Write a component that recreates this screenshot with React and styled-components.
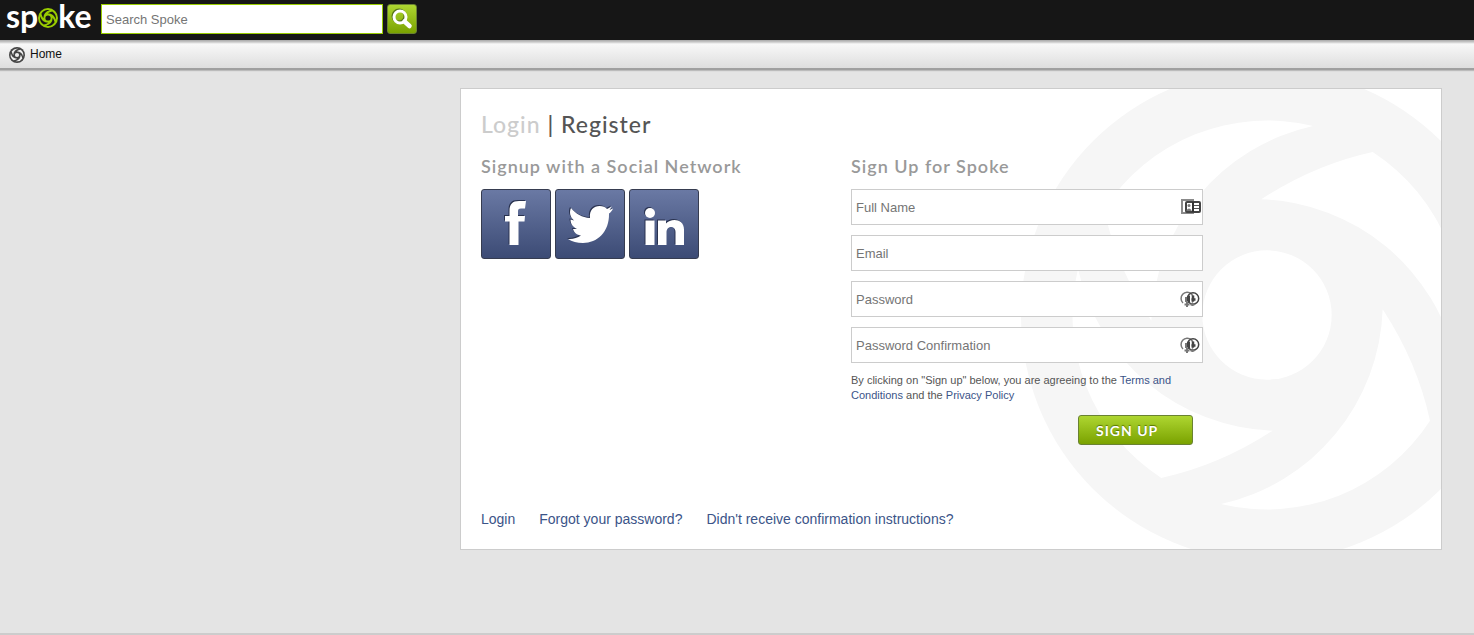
import React from "react";
import styled, { createGlobalStyle } from "styled-components";

const Global = createGlobalStyle`
  *, *::before, *::after { box-sizing: border-box; }
  html { min-height: 100%; background: #e4e4e4; }
  body {
    margin: 0;
    min-height: 100vh;
    font-family: "Liberation Sans", Arial, sans-serif;
    color: #555;
  }
  a { text-decoration: none; color: #3b5488; }
`;

const display = `font-family: Lato, "Open Sans", sans-serif;`;

const Page = styled.div`
  display: flex;
  flex-direction: column;
  min-height: 100vh;
  border-bottom: 2px solid #ccc;
`;

const TopBar = styled.header`
  display: flex;
  align-items: flex-start;
  height: 40px;
  padding: 0 6px;
  background: #161616;
`;

const Brand = styled.a`
  display: flex;
  align-items: flex-start;
  width: 95px;
  ${display}
  font-size: 32px;
  font-weight: 700;
  line-height: 32px;
  color: #fff;

  svg { margin-top: 8px; }
`;

const SearchForm = styled.form`
  display: flex;
  gap: 4px;
  padding-top: 4px;
`;

const SearchInput = styled.input`
  width: 282px;
  height: 30px;
  padding: 0 4px;
  border: 1px solid #9c0;
  font: 13px "Liberation Sans", Arial, sans-serif;
  color: #444;
  &::placeholder { color: #757575; opacity: 1; }
`;

const GreenButton = styled.button`
  height: 30px;
  padding: 0;
  border: 1px solid #6a8232;
  border-radius: 3px;
  background: linear-gradient(#aed631, #7aa200);
  color: #fff;
`;

const SearchButton = styled(GreenButton)`
  display: flex;
  align-items: center;
  justify-content: center;
  width: 30px;
`;

const Crumbs = styled.nav`
  display: flex;
  align-items: center;
  gap: 5px;
  height: 30px;
  padding: 2px 9px 0;
  border-bottom: 2px solid #a0a0a0;
  box-shadow: 0 1px 1px #bbb;
  background: linear-gradient(#a8a8a8, #c8c8c8 2px, #f8f8f8 4px, #dedede);
  font-size: 12px;

  a { color: #111; line-height: 14px; padding-bottom: 2px; }
`;

const Main = styled.main`
  display: flex;
  justify-content: flex-end;
  padding: 18px 32px;
`;

const Card = styled.section`
  position: relative;
  overflow: hidden;
  width: 982px;
  min-height: 462px;
  display: flex;
  flex-direction: column;
  justify-content: space-between;
  padding: 20px;
  border: 1px solid #ccc;
  background: #fff;
`;

const Watermark = styled.svg`
  position: absolute;
  right: -73px;
  top: -21px;
  width: 494px;
  height: 494px;
`;

const Content = styled.div`
  position: relative;
`;

const Title = styled.h1`
  margin: 0 0 16px;
  ${display}
  font-size: 23px;
  font-weight: 500;
  line-height: 30px;
  letter-spacing: 1px;
  color: #555;

  a { color: #ccc; }
`;

const Columns = styled.div`
  display: grid;
  grid-template-columns: 352px 352px;
  column-gap: 18px;
`;

const Heading = styled.h2`
  margin: 0 0 12px;
  ${display}
  font-size: 18px;
  font-weight: 600;
  line-height: 22px;
  letter-spacing: 1px;
  color: #999;
`;

const SocialRow = styled.div`
  display: flex;
  gap: 4px;
`;

const SocialLink = styled.a`
  width: 70px;
  height: 70px;
  border: 1px solid #363c50;
  border-radius: 3px;
  background: linear-gradient(#6a79a4, #3c4b75);
  svg { display: block; }
`;

const SignupForm = styled.form`
  display: flex;
  flex-direction: column;
  gap: 10px;
`;

const Field = styled.label`
  position: relative;
  display: block;
  height: 36px;
`;

const FieldInput = styled.input`
  width: 100%;
  height: 36px;
  padding: 0 24px 0 4px;
  border: 1px solid #ccc;
  background: #fff;
  font: 13px "Liberation Sans", Arial, sans-serif;
  color: #444;
  &::placeholder { color: #757575; opacity: 1; }
`;

const FieldIcon = styled.svg`
  position: absolute;
  right: 1px;
  top: 8px;
  width: 22px;
  height: 20px;
`;

const Terms = styled.p`
  margin: 0;
  max-width: 340px;
  font-size: 11px;
  line-height: 15px;
`;

const SubmitButton = styled(GreenButton)`
  align-self: flex-end;
  width: 115px;
  margin: 2px 10px 0 0;
  padding: 0 17px;
  ${display}
  font-size: 14px;
  font-weight: 700;
  letter-spacing: 1px;
  text-align: left;
  text-shadow: 0 -1px 1px #567300;
`;

const FooterLinks = styled.nav`
  position: relative;
  display: flex;
  gap: 24px;
  font-size: 14px;
  line-height: 20px;
`;

const ring = (r) => `M${-r} 0A${r} ${r} 0 1 0 ${r} 0A${r} ${r} 0 1 0 ${-r} 0Z`;
const blade =
  "M-17 -347Q142 -451 317 -489A583 583 0 0 1 567 138A619 619 0 0 0 -17 -347Z";

function Swirl({ color, cut, size }) {
  return (
    <svg width={size} height={size} viewBox="-740 -740 1480 1480" aria-hidden="true">
      <path d={ring(738)} fill={color} />
      <SwirlCuts cut={cut} />
    </svg>
  );
}

function SwirlCuts({ cut }) {
  return (
    <g fill={cut}>
      <circle r="194" />
      {[0, 90, 180, 270].map((a) => (
        <path key={a} d={blade} transform={`rotate(${a})`} />
      ))}
    </g>
  );
}

function CardIcon() {
  return (
    <FieldIcon viewBox="0 0 22 20" fill="none" aria-hidden="true">
      <rect x="2" y="3" width="11" height="13" stroke="#8a8a8a" strokeWidth="2" />
      <rect x="6" y="5" width="14" height="10" rx="1" stroke="#444" strokeWidth="2" />
      <path d="M13 5v10" stroke="#333" strokeWidth="2" />
      <circle cx="9" cy="8.500" r="1.500" fill="#777" />
      <path d="M6.500 14v-1q2.500-3 5 0v1z" fill="#777" />
      <path d="M14 8.500h5M14 11.500h5" stroke="#555" />
    </FieldIcon>
  );
}

function KeyIcon() {
  return (
    <FieldIcon viewBox="0 0 22 20" fill="none" aria-hidden="true">
      <path d="M3 14A6.200 6.200 0 1 1 12 13.500" stroke="#777" strokeWidth="1.500" />
      <circle cx="13" cy="9.500" r="5.700" stroke="#444" strokeWidth="1.500" />
      <path d="M6 8v5" stroke="#777" strokeWidth="2" />
      <path d="M9 6.500v7" stroke="#444" strokeWidth="2" />
      <path d="M13 6.500v6" stroke="#444" strokeWidth="2.500" />
      <path d="M11.500 10.500h4" stroke="#444" strokeWidth="2.500" />
      <path d="M4.500 15.500h5M7 13v5M10.500 15.500h4M12.500 14v3" stroke="#777" strokeWidth="2" />
    </FieldIcon>
  );
}

const GLYPHS = {
  Facebook: (
    <path d="M27.500 55V31.500H23V26H27.500V21C27.500 14 30.500 11 37 11H44L43 18.500H39C36.500 18.500 36 19.500 36 21.500V26H43L42.500 31.500H36.500V55Z" />
  ),
  Twitter: (
    <path d="M57 18.500C56 21 54.500 22.500 53 23.500C53.500 42 41 53 27 53C21 53 16 51.500 12 49C17 49.500 21 48 25 45.500C21 45 18 42.500 17 39H21C17 37 14.500 34 14.500 29.500L18 30.500C14 27 13 22 15 18C20 24 26 27.500 34 28C33 20 38 16 43.500 16C47 16 49.500 17 51 19L56 16.500L53.500 20Z" />
  ),
  LinkedIn: (
    <>
      <circle cx="20" cy="23" r="5" />
      <path d="M15.500 30.500H24.500V55H15.500ZM28 30.500H36V33.500C41 28 54 28.500 54 39.500V55H45.500V42C45.500 35 36.500 35.500 36.500 42V55H28Z" />
    </>
  ),
};

const FIELDS = [
  { label: "Full Name", type: "text", Icon: CardIcon },
  { label: "Email", type: "email" },
  { label: "Password", type: "password", Icon: KeyIcon },
  { label: "Password Confirmation", type: "password", Icon: KeyIcon },
];

export default function App() {
  return (
    <Page>
      <Global />
      <TopBar>
        <Brand href="#" aria-label="spoke">
          <span>sp</span>
          <Swirl color="#9c0" cut="#161616" size={20} />
          <span>ke</span>
        </Brand>
        <SearchForm>
          <SearchInput aria-label="Search Spoke" placeholder="Search Spoke" />
          <SearchButton type="submit" aria-label="Search">
            <svg width="22" height="22" viewBox="0 0 22 22" fill="none">
              <g stroke="#56761a" transform="translate(-1 -1)">
                <circle cx="9" cy="9" r="6" strokeWidth="3" />
              </g>
              <circle cx="9" cy="9" r="6" stroke="#fff" strokeWidth="3" />
              <path d="M13.500 13.500L18.500 18" stroke="#fff" strokeWidth="4.500" strokeLinecap="round" />
            </svg>
          </SearchButton>
        </SearchForm>
      </TopBar>
      <Crumbs>
        <Swirl color="#444" cut="#eee" size={16} />
        <a href="#">Home</a>
      </Crumbs>
      <Main>
        <Card>
          <Watermark viewBox="-741 -741 1482 1482" aria-hidden="true">
            <path d={ring(738)} fill="#f6f6f6" />
            <SwirlCuts cut="#fff" />
          </Watermark>
          <Content>
            <Title>
              <a href="#">Login</a> | Register
            </Title>
            <Columns>
              <div>
                <Heading>Signup with a Social Network</Heading>
                <SocialRow>
                  {Object.entries(GLYPHS).map(([name, glyph]) => (
                    <SocialLink key={name} href="#" aria-label={name}>
                      <svg width="68" height="68" viewBox="0 0 68 68">
                        <g fill="#2a3350" transform="translate(-1 -1)">{glyph}</g>
                        <g fill="#fff">{glyph}</g>
                      </svg>
                    </SocialLink>
                  ))}
                </SocialRow>
              </div>
              <div>
                <Heading>Sign Up for Spoke</Heading>
                <SignupForm>
                  {FIELDS.map(({ label, type, Icon }) => (
                    <Field key={label}>
                      <FieldInput type={type} placeholder={label} aria-label={label} />
                      {Icon && <Icon />}
                    </Field>
                  ))}
                  <Terms>
                    By clicking on "Sign up" below, you are agreeing to the{" "}
                    <a href="#">Terms and Conditions</a> and the <a href="#">Privacy Policy</a>
                  </Terms>
                  <SubmitButton type="submit">SIGN UP</SubmitButton>
                </SignupForm>
              </div>
            </Columns>
          </Content>
          <FooterLinks>
            <a href="#">Login</a>
            <a href="#">Forgot your password?</a>
            <a href="#">Didn't receive confirmation instructions?</a>
          </FooterLinks>
        </Card>
      </Main>
    </Page>
  );
}
